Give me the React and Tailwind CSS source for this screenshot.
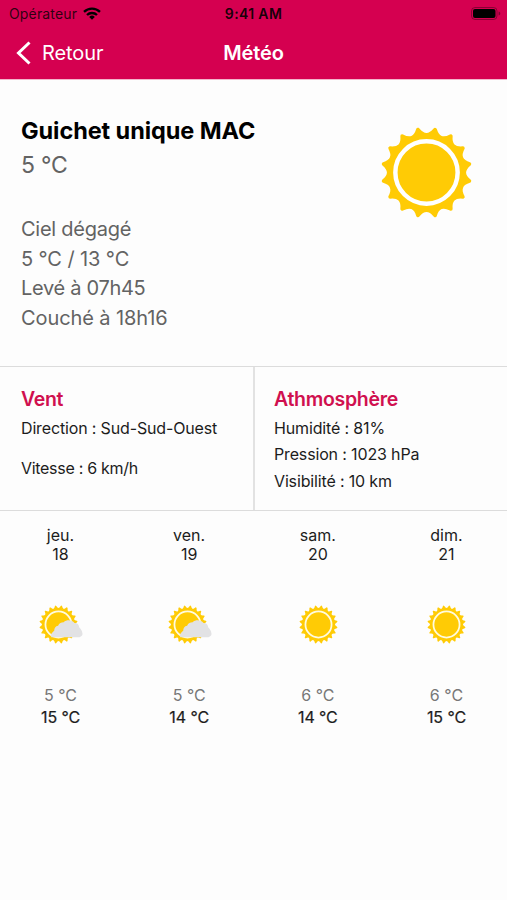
import React from 'react';

// Builds the scalloped outline of the sun around (50, 50)
const sunOutline = (teeth, outer, inner) => {
  const step = (Math.PI * 2) / teeth;
  const at = (radius, angle) =>
    `${(50 + radius * Math.sin(angle)).toFixed(2)} ${(50 - radius * Math.cos(angle)).toFixed(2)}`;
  let path = `M${at(outer, step / 2)}`;
  for (let i = 1; i <= teeth; i++) {
    path += `Q${at(inner, i * step)} ${at(outer, (i + 0.5) * step)}`;
  }
  return `${path}Z`;
};

const Sun = ({ teeth = 16, inner = 35, ring = 4.8, ringColor = '#fff' }) => (
  <g>
    <path
      d={sunOutline(teeth, 47, inner)}
      fill="#ffcb05"
      stroke="#ffcb05"
      strokeWidth="4"
      strokeLinejoin="round"
    />
    <circle cx="50" cy="50" r="33.5" fill="none" stroke={ringColor} strokeWidth={ring} />
  </g>
);

const SunIcon = ({ className }) => (
  <svg viewBox="0 0 100 100" className={className}>
    <Sun />
  </svg>
);

const SmallIcon = ({ cloudy }) => (
  <svg viewBox="0 0 100 100" className={`h-[39px] w-[39px] overflow-visible ${cloudy ? 'mr-[4px]' : 'ml-px'}`}>
    <Sun teeth={20} inner={34} ring={4.5} ringColor="#fffbe0" />
    {cloudy && (
      <path
        d="M31 80c-1-6 3-10 8-14 0-7 3-12 10-13 3-7 8-9 14-9 9-8 22-6 28 2 8 0 12 5 12 11 4 4 7 8 8 14 2 5-1 8-4 10-2 2-5 2-8 2H34c-2 0-3-1-3-3z"
        fill="#e2e2e4"
      />
    )}
  </svg>
);

const days = [
  { name: 'jeu.', date: 18, min: 5, max: 15, cloudy: true },
  { name: 'ven.', date: 19, min: 5, max: 14, cloudy: true },
  { name: 'sam.', date: 20, min: 6, max: 14, cloudy: false },
  { name: 'dim.', date: 21, min: 6, max: 15, cloudy: false },
];

const StatusBar = () => (
  <div className="grid h-[27px] grid-cols-3 items-center px-[9px] text-[14px] leading-none text-black/80">
    <div className="flex items-center gap-[6px]">
      <span className="tracking-[0.15px]">Opérateur</span>
      <svg viewBox="0 0 18 13" className="h-[13px] w-[18px]" fill="none" stroke="#000" strokeWidth="2.3">
        <path d="M1 4.9a11.4 11.4 0 0 1 16 0" />
        <path d="M4 8a7.2 7.2 0 0 1 10 0" />
        <path d="M9 12.7 6.2 9.9a4 4 0 0 1 5.6 0z" fill="#000" stroke="none" />
      </svg>
    </div>
    <span className="pt-px text-center font-semibold tracking-[0.35px] text-black/90">9:41 AM</span>
    <svg viewBox="0 0 30 13" className="mr-[-3px] h-[13px] w-[30px] justify-self-end">
      <rect x="0.5" y="0.5" width="25.500" height="12" rx="3.5" fill="none" stroke="#000" strokeOpacity="0.35" />
      <rect x="2" y="2" width="22.500" height="9" rx="2" fill="#000" />
      <path d="M27.600 4.500c2.200.6 2.200 3.400 0 4z" fill="#000" fillOpacity="0.4" />
    </svg>
  </div>
);

const App = () => {
  return (
    <div className="h-[900px] w-full overflow-hidden bg-[#fdfdfd] font-['Inter','Liberation_Sans',sans-serif] text-[#1c1c1c]">
      <header className="h-[79px] bg-[#d50050]">
        <StatusBar />
        <div className="grid h-[51px] grid-cols-3 items-center text-[20px] text-white">
          <div className="flex items-center gap-[11px] pl-[16px]">
            <svg viewBox="0 0 15 24" className="h-[24px] w-[15px]" fill="none" stroke="#fff" strokeWidth="3">
              <path d="M13.500 1.500 2.500 12l11 10.500" />
            </svg>
            <span className="tracking-[-0.1px]">Retour</span>
          </div>
          <h1 className="text-center font-semibold tracking-[-0.1px]">Météo</h1>
        </div>
      </header>

      {/* Current conditions */}
      <section className="flex h-[287px] justify-between border-t border-[#f3b5cb] pl-[21px] pr-[34px] text-[#636363]">
        <div className="pt-[34px]">
          <h2 className="text-[23.500px] font-bold leading-[34px] tracking-[-0.08px] text-black">Guichet unique MAC</h2>
          <p className="text-[23px] leading-[34px] tracking-[-0.2px]">5 °C</p>
          <div className="mt-[33px] text-[20px] leading-[29.700px] tracking-[-0.1px]">
            <p className="tracking-[-0.25px]">Ciel dégagé</p>
            <p>5 °C / 13 °C</p>
            <p className="tracking-[-0.3px]">Levé à 07h45</p>
            <p>Couché à 18h16</p>
          </div>
        </div>
        <SunIcon className="mt-[46px] h-[93px] w-[93px]" />
      </section>

      {/* Wind and atmosphere */}
      <section className="grid h-[145px] grid-cols-[255px_1fr] border-y border-[#dcdcdc] text-[16px] leading-[26.500px] tracking-[-0.15px]">
        <div className="border-r-2 border-[#e2e2e2] pl-[21px] pt-[18px]">
          <h3 className="mb-[0.5px] text-[19.500px] font-semibold leading-[29px] tracking-[-0.3px] text-[#d0104f]">Vent</h3>
          <p>Direction : Sud-Sud-Ouest</p>
          <p className="mt-[13.500px] tracking-[-0.3px]">Vitesse : 6 km/h</p>
        </div>
        <div className="pl-[19px] pt-[18px]">
          <h3 className="mb-[0.5px] text-[19.500px] font-semibold leading-[29px] tracking-[-0.3px] text-[#d0104f]">Athmosphère</h3>
          <p>Humidité : 81%</p>
          <p>Pression : 1023 hPa</p>
          <p>Visibilité : 10 km</p>
        </div>
      </section>

      {/* Forecast */}
      <section className="flex justify-between pt-[15px] text-[16px]">
        {days.map(day => (
          <div key={day.date} className="flex w-[121px] flex-col items-center">
            <p className="leading-[19px]">{day.name}</p>
            <p className="leading-[19px]">{day.date}</p>
            <div className="flex h-[121px] items-center">
              <SmallIcon cloudy={day.cloudy} />
            </div>
            <p className="leading-[21.500px] text-[#777]">{day.min} °C</p>
            <p className="leading-[21px] tracking-[-0.1px] [-webkit-text-stroke:0.2px]">{day.max} °C</p>
          </div>
        ))}
      </section>
    </div>
  );
};

export default App;
